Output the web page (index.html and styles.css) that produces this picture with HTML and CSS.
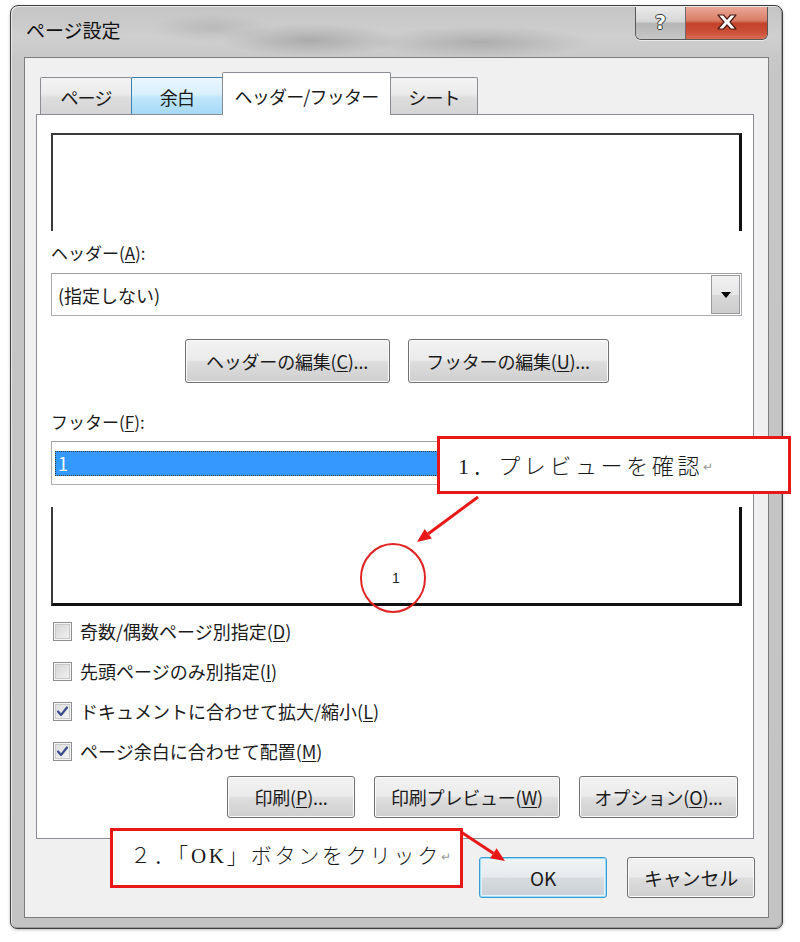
FILE: index.html
```html
<!DOCTYPE html>
<html lang="ja">
<head>
<meta charset="utf-8">
<title>ページ設定</title>
<link rel="stylesheet" href="styles.css">
</head>
<body>
<div class="window">
  <div class="titlebar">
    <span class="title">ページ設定</span>
    <div class="caption">
      <span class="cap-help">?</span>
      <span class="cap-close">
        <svg width="24" height="18" viewBox="0 0 24 18"><path d="M3 2 L8.5 2 L12 6.2 L15.5 2 L21 2 L15 9 L21 16 L15.5 16 L12 11.8 L8.5 16 L3 16 L9 9 Z" fill="#fff" stroke="#4a1a10" stroke-width="1.2" stroke-linejoin="round"/></svg>
      </span>
    </div>
  </div>
  <div class="client">
    <div class="tabs">
      <div class="tab tab-page">ページ</div>
      <div class="tab tab-margin hot">余白</div>
      <div class="tab tab-hf active">ヘッダー/フッター</div>
      <div class="tab tab-sheet">シート</div>
    </div>
    <div class="panel">
      <div class="preview preview-head"></div>
      <div class="field-label">ヘッダー(<u>A</u>):</div>
      <div class="combo">
        <span class="combo-text">(指定しない)</span>
        <span class="combo-btn"><i class="arrow"></i></span>
      </div>
      <div class="edit-row">
        <button class="btn btn-edit-head"><span>ヘッダーの編集(<u>C</u>)...</span></button>
        <button class="btn btn-edit-foot"><span>フッターの編集(<u>U</u>)...</span></button>
      </div>
      <div class="field-label field-label-foot">フッター(<u>F</u>):</div>
      <div class="combo combo-foot"><span class="selection">1</span></div>
      <div class="preview preview-foot"><span class="page-no">1</span></div>
      <div class="checks">
        <label class="check"><span class="box"></span><span>奇数/偶数ページ別指定(<u>D</u>)</span></label>
        <label class="check"><span class="box"></span><span>先頭ページのみ別指定(<u>I</u>)</span></label>
        <label class="check"><span class="box checked"><svg width="13" height="13" viewBox="0 0 13 13"><path d="M2 6.5 L5 10 L11 2.5" fill="none" stroke="#3b4f8c" stroke-width="2.2" stroke-linecap="round" stroke-linejoin="round"/></svg></span><span>ドキュメントに合わせて拡大/縮小(<u>L</u>)</span></label>
        <label class="check"><span class="box checked"><svg width="13" height="13" viewBox="0 0 13 13"><path d="M2 6.5 L5 10 L11 2.5" fill="none" stroke="#3b4f8c" stroke-width="2.2" stroke-linecap="round" stroke-linejoin="round"/></svg></span><span>ページ余白に合わせて配置(<u>M</u>)</span></label>
      </div>
      <div class="print-row">
        <button class="btn btn-print"><span>印刷(<u>P</u>)...</span></button>
        <button class="btn btn-preview"><span>印刷プレビュー(<u>W</u>)</span></button>
        <button class="btn btn-options"><span>オプション(<u>O</u>)...</span></button>
      </div>
    </div>
    <div class="dialog-row">
      <button class="btn btn-ok">OK</button>
      <button class="btn btn-cancel">キャンセル</button>
    </div>
  </div>
</div>

<div class="note note-preview">1．プレビューを確認<span class="ret">↵</span></div>
<div class="note note-ok">２．「OK」ボタンをクリック<span class="ret">↵</span></div>

<svg class="marks" width="800" height="942" viewBox="0 0 800 942">
  <line x1="478" y1="497" x2="428.3" y2="533.7" stroke="#e81818" stroke-width="3"/>
  <polygon points="417,542 431.9,538.5 424.7,528.9" fill="#e81818"/>
  <ellipse cx="393" cy="578" rx="32" ry="34" fill="none" stroke="#e02424" stroke-width="2"/>
  <line x1="461" y1="832" x2="493.3" y2="853.3" stroke="#e81818" stroke-width="3"/>
  <polygon points="505,861 490,858.3 496.6,848.3" fill="#e81818"/>
</svg>
</body>
</html>
```

FILE: styles.css
```css
* {
  box-sizing: border-box;
}

body {
  margin: 0;
  width: 800px;
  height: 942px;
  padding: 5px 0 0 10px;
  position: relative;
  overflow: hidden;
  background: #fff;
  font-family: "Noto Sans CJK JP", "Noto Sans", sans-serif;
  color: #1b1b1b;
}

u {
  text-decoration: underline;
  text-underline-offset: 2px;
}

/* ---- window frame ---- */
.window {
  width: 773px;
  height: 924px;
  border: 1px solid #3e3e3e;
  border-radius: 8px 8px 7px 7px;
  padding: 0 13px 10px 13px;
  display: flex;
  flex-direction: column;
  background:
    radial-gradient(ellipse 90px 16px at 300px 34px, rgba(80, 80, 80, 0.28), transparent),
    radial-gradient(ellipse 110px 16px at 470px 36px, rgba(80, 80, 80, 0.25), transparent),
    radial-gradient(ellipse 60px 14px at 200px 22px, rgba(80, 80, 80, 0.15), transparent),
    linear-gradient(#c4c4c4, #cfcfcf 30px, #c8c8c8 52px, #c6c6c6 70px, #c3c3c3);
  box-shadow: inset 1px 1px 0 #e8e8e8, inset -1px -1px 0 #9a9a9a, 0 1px 3px rgba(0, 0, 0, 0.25);
}

.titlebar {
  height: 51px;
  display: flex;
  justify-content: space-between;
  align-items: flex-start;
}

.title {
  padding: 12px 0 0 2px;
  font-size: 19px;
  line-height: 24px;
  color: #111;
}

.caption {
  display: flex;
  margin-top: 1px;
  margin-right: 1px;
  height: 33px;
  border: 1px solid #585858;
  border-top: none;
  border-radius: 0 0 6px 6px;
  overflow: hidden;
  box-shadow: 0 1px 0 rgba(255, 255, 255, 0.6);
}

.cap-help {
  width: 50px;
  display: flex;
  justify-content: center;
  align-items: center;
  font-family: "DejaVu Sans", sans-serif;
  font-weight: bold;
  font-size: 19px;
  color: #fff;
  text-shadow: 1px 0 0 #333, -1px 0 0 #333, 0 1px 0 #333, 0 -1px 0 #333;
  background: linear-gradient(#eaeaea, #d6d6d6 45%, #b5b5b5 52%, #c7c7c7);
  border-right: 1px solid #6a6a6a;
  padding-bottom: 2px;
}

.cap-close {
  width: 81px;
  display: flex;
  justify-content: center;
  align-items: center;
  background: linear-gradient(#eaa898, #d97d66 42%, #c3412a 52%, #cc5138 80%, #d96f56);
  padding-bottom: 2px;
}

/* ---- client area ---- */
.client {
  flex: 1;
  background: #f0f0f0;
  border: 1px solid #7d7d7d;
  padding: 14px 13px 19px 11px;
  display: flex;
  flex-direction: column;
}

.tabs {
  height: 43px;
  margin-bottom: -1px;
  padding-left: 4px;
  display: flex;
  align-items: flex-start;
  position: relative;
  z-index: 1;
}

.tab {
  height: 37px;
  margin-top: 5px;
  margin-left: -1px;
  border: 1px solid #8c8e94;
  border-bottom: none;
  border-radius: 2px 2px 0 0;
  background: linear-gradient(#f3f3f3, #ebebeb 45%, #dddddd 55%, #d4d4d4);
  display: flex;
  justify-content: center;
  align-items: center;
  font-size: 18px;
  letter-spacing: -0.8px;
  padding-top: 1px;
}

.tab-page { width: 92px; margin-left: 0; }
.tab-margin { width: 92px; }
.tab-hf { width: 169px; }
.tab-sheet { width: 88px; }

.tab.hot {
  border-color: #3c7fb1;
  background: linear-gradient(#eaf6fd, #d9f0fc 45%, #bee6fd 55%, #a7d9f5);
  position: relative;
  z-index: 2;
}

.tab.active {
  height: 43px;
  margin-top: 0;
  background: #fff;
  border-color: #898c95;
  position: relative;
  z-index: 3;
  padding-top: 4px;
}

.panel {
  width: 718px;
  height: 725px;
  background: #fff;
  border: 1px solid #898c95;
  padding: 18px 12px 0 14px;
  display: flex;
  flex-direction: column;
}

/* ---- previews ---- */
.preview {
  width: 691px;
  height: 98px;
  flex: none;
}

.preview-head {
  border-top: 2px solid #3a3a3a;
  border-left: 2px solid #3a3a3a;
  border-right: 3px solid #111;
}

.preview-foot {
  height: 99px;
  margin-top: 22px;
  border-left: 2px solid #3a3a3a;
  border-right: 3px solid #111;
  border-bottom: 3px solid #111;
  display: flex;
  justify-content: center;
  align-items: flex-end;
  padding-bottom: 17px;
}

.page-no {
  font-family: "Liberation Sans", sans-serif;
  font-size: 14px;
  line-height: 16px;
  color: #222;
}

/* ---- labels & combos ---- */
.field-label {
  height: 42px;
  padding-top: 10px;
  font-size: 17px;
  line-height: 24px;
}

.field-label-foot {
  height: 58px;
  padding-top: 27px;
}

.combo {
  width: 691px;
  height: 43px;
  flex: none;
  border: 1px solid #abadb3;
  border-top-color: #a0a0a0;
  display: flex;
  align-items: center;
  justify-content: space-between;
  padding: 0 1px 0 6px;
  background: #fff;
}

.combo-text {
  font-size: 18px;
  line-height: 24px;
}

.combo-btn {
  width: 29px;
  height: 39px;
  border: 1px solid #9a9a9a;
  background: linear-gradient(#f2f2f2, #e6e6e6 50%, #d8d8d8 51%, #cdcdcd);
  display: flex;
  justify-content: center;
  align-items: center;
}

.arrow {
  width: 0;
  height: 0;
  border-left: 5px solid transparent;
  border-right: 5px solid transparent;
  border-top: 6px solid #000;
  margin-top: 1px;
}

.combo-foot {
  height: 44px;
  padding: 0 3px;
}

.selection {
  flex: 1;
  height: 25px;
  background: #3399ff;
  outline: 1px dotted #3c3c3c;
  outline-offset: -1px;
  color: #fff;
  font-size: 18px;
  line-height: 25px;
  padding-left: 3px;
}

/* ---- buttons ---- */
.btn {
  font-family: inherit;
  font-size: 18px;
  color: #1b1b1b;
  border: 1px solid #707070;
  border-radius: 3px;
  background: linear-gradient(#f2f2f2, #ebebeb 48%, #dddddd 52%, #cfcfcf);
  box-shadow: inset 0 0 0 1px #fbfbfb;
  padding: 0;
  display: flex;
  justify-content: center;
  align-items: center;
  letter-spacing: -0.2px;
}

.edit-row {
  margin-top: 23px;
  display: flex;
  justify-content: center;
  gap: 18px;
  padding-left: 1px;
}

.edit-row .btn {
  height: 44px;
}

.btn-edit-head { width: 205px; }
.btn-edit-foot { width: 201px; }

/* ---- check boxes ---- */
.checks {
  margin-top: 5px;
  display: flex;
  flex-direction: column;
}

.check {
  height: 40px;
  display: flex;
  align-items: center;
  gap: 8px;
  font-size: 18px;
  padding-left: 2px;
}

.box {
  width: 19px;
  height: 19px;
  flex: none;
  border: 1px solid #8e8f8f;
  background: linear-gradient(135deg, #d3d3d3, #f3f3f3);
  box-shadow: inset 0 0 0 1px #f4f4f4, inset 0 0 0 2px #c9c9c9;
  display: flex;
  justify-content: center;
  align-items: center;
}

.box.checked {
  background: linear-gradient(135deg, #dcdcdc, #f7f7f7);
}

.print-row {
  margin-top: 5px;
  display: flex;
  justify-content: flex-end;
  gap: 19px;
  padding-right: 3px;
}

.print-row .btn {
  height: 42px;
}

.btn-print { width: 128px; }
.btn-preview { width: 186px; }
.btn-options { width: 159px; }

/* ---- dialog buttons ---- */
.dialog-row {
  margin-top: 18px;
  display: flex;
  justify-content: flex-end;
  gap: 20px;
}

.dialog-row .btn {
  width: 128px;
  height: 41px;
  font-size: 19px;
}

.btn-ok {
  border-color: #3c9bd0;
  box-shadow: inset 0 0 0 1px #9fdcf8, inset 0 0 0 2px #e4f5fd;
  background: linear-gradient(#f0f4f7, #e6eaee 48%, #d6dbe0 52%, #cbd0d6);
}

/* ---- annotations ---- */
.note {
  position: absolute;
  background: #fff;
  border: 3px solid #e81818;
  white-space: nowrap;
  font-family: "Liberation Serif", "Noto Sans CJK JP", serif;
  font-weight: 300;
  color: #1a1a1a;
  display: flex;
  align-items: center;
}

.note-preview {
  left: 437px;
  top: 436px;
  width: 354px;
  height: 58px;
  padding: 0 0 2px 18px;
  font-size: 22px;
  letter-spacing: 3.6px;
}

.note-ok {
  left: 110px;
  top: 828px;
  width: 353px;
  height: 60px;
  padding: 0 0 8px 17px;
  font-size: 21px;
  letter-spacing: 2.8px;
}

.ret {
  font-family: "DejaVu Sans", sans-serif;
  font-size: 12px;
  color: #9a9a9a;
  margin-left: 0;
  padding-top: 6px;
  letter-spacing: 0;
}

.marks {
  position: absolute;
  left: 0;
  top: 0;
  pointer-events: none;
}
```
